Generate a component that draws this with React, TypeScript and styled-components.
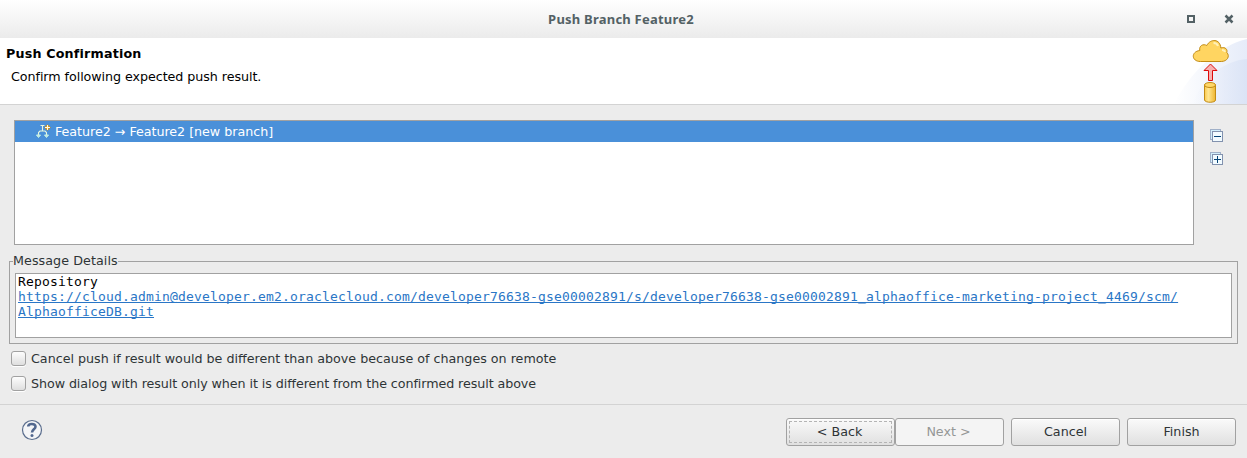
import React from "react";
import styled, { createGlobalStyle } from "styled-components";

const Global = createGlobalStyle`
  * { box-sizing: border-box; }
  html, body { margin: 0; background: #ececec; }
  body { overflow: hidden; font: 12.7px/16px "DejaVu Sans", Verdana, sans-serif; color: #2e3436; }
`;

const Window = styled.div`
  width: 1247px;
  height: 458px;
  display: flex;
  flex-direction: column;
  background: #ececec;
  white-space: pre;
`;

const TitleBar = styled.header`
  height: 38px;
  flex: none;
  display: grid;
  grid-template-columns: 1fr auto 1fr;
  align-items: center;
  background: linear-gradient(#fff, #ebebeb);
  padding-left: 1px;
  padding-right: 6px;
`;

const WindowTitle = styled.h1`
  grid-column: 2;
  margin: 0;
  font: bold 13px/20px "Noto Sans", "Open Sans", sans-serif;
  letter-spacing: 0.22px;
  color: #536165;
`;

const WindowControls = styled.div`
  display: flex;
  justify-content: flex-end;
  gap: 25px;
  padding-right: 6px;
`;

const Banner = styled.section`
  height: 67px;
  flex: none;
  display: flex;
  justify-content: space-between;
  background: #fff;
  border-bottom: 1px solid #d3d3d3;
  color: #000;
`;

const BannerText = styled.div`
  padding: 8px 0 0 6px;
`;

const Heading = styled.h2`
  margin: 0 0 7px;
  font-size: 12.7px;
  line-height: 16px;
  font-weight: bold;
  letter-spacing: 0.18px;
`;

const Text = styled.span<{ $spacing?: number }>`
  letter-spacing: ${(p) => p.$spacing ?? 0}px;
`;

const Description = styled.p`
  margin: 0 0 0 5px;
  letter-spacing: -0.06px;
`;

const Content = styled.main`
  flex: 1;
  padding: 15px 9px 0;
`;

const ResultArea = styled.div`
  display: flex;
  gap: 16px;
  padding-left: 5px;
`;

const Tree = styled.div`
  width: 1180px;
  height: 125px;
  border: 1px solid #a1a1a1;
  background: #fff;
`;

const TreeRow = styled.div`
  height: 21px;
  display: flex;
  align-items: center;
  gap: 4px;
  padding-left: 20px;
  background: #4a90d9;
  color: #fff;
`;

const TreeTools = styled.div`
  display: flex;
  flex-direction: column;
  gap: 9px;
  padding-top: 9px;
`;

const Group = styled.fieldset`
  width: 1229px;
  height: 91px;
  margin: 8px 0 2px;
  padding: 4px 5px 5px;
  border: 1px solid #a1a1a1;
`;

const Legend = styled.legend`
  margin-left: -2px;
  padding: 0;
  line-height: 16px;
  letter-spacing: 0.07px;
`;

const Details = styled.div`
  height: 65px;
  padding: 0 2px;
  border: 1px solid #a1a1a1;
  background: #fff;
  color: #000;
  font: 13px/15px "DejaVu Sans Mono", monospace;
  letter-spacing: 0.174px;
`;

const Link = styled.a`
  display: inline-block;
  color: #2a76c6;
  text-decoration: underline;
  text-underline-offset: 1px;
  text-decoration-skip-ink: none;
  text-decoration-thickness: 1px;
`;

const Option = styled.label`
  height: 25px;
  display: flex;
  align-items: center;
  gap: 5px;
  padding-left: 2px;
`;

const CheckBox = styled.input`
  appearance: none;
  width: 15px;
  height: 15px;
  margin: 0;
  border: 1px solid #a1a1a1;
  border-radius: 3px;
  background: linear-gradient(#fdfdfd, #dedede);
  box-shadow: 0 1px #fff;
`;

const Footer = styled.footer`
  height: 54px;
  flex: none;
  display: flex;
  align-items: center;
  padding: 0 11px 0 21px;
  border-top: 1px solid #d3d3d3;
`;

const HelpButton = styled.span`
  display: flex;
  padding-bottom: 4px;
`;

const Actions = styled.div`
  display: flex;
  margin-left: auto;
`;

const Button = styled.button<{ $gap?: number }>`
  width: 109px;
  height: 28px;
  margin: 0 0 0 ${(p) => p.$gap ?? 0}px;
  padding: 2px;
  border: 1px solid #a1a1a1;
  border-radius: 3px;
  background: linear-gradient(#fafafa, #e0e0e0);
  box-shadow: inset 0 1px #fff;
  color: #2e3436;
  font: inherit;
  &:disabled { background: #f4f4f4; color: #949796; box-shadow: none; padding-right: 4px; }
`;

const FocusRing = styled.span`
  display: block;
  height: 22px;
  padding-right: 2px;
  line-height: 20px;
  border: 1px dashed #b4b4b4;
`;

const BannerArt = () => (
  <svg width="75" height="66" viewBox="0 0 75 66">
    <defs>
      <linearGradient id="wave" x1="0" y1="0" x2="1" y2="0">
        <stop offset="0" stopColor="#fff" />
        <stop offset="1" stopColor="#e6ecf9" />
      </linearGradient>
      <linearGradient id="swell" x1="0" y1="0" x2="1" y2="0">
        <stop offset="0" stopColor="#e9eefa" stopOpacity="0" />
        <stop offset="1" stopColor="#dbe4f6" />
      </linearGradient>
      <linearGradient id="barrel">
        <stop stopColor="#fbc94b" />
        <stop offset=".35" stopColor="#ffe691" />
        <stop offset="1" stopColor="#efb52f" />
      </linearGradient>
    </defs>
    <path d="M2 66C17 36 45 8 75 1V66Z" fill="url(#wave)" />
    <path d="M20 66C32 38 52 23 75 21V66Z" fill="url(#swell)" />
    <path d="M28 23.500C19 23.500 18.500 13.500 27.500 12.500C26.500 7.500 31 5.500 34.500 7.500C38 .5 48 .5 48.500 10C53 8.500 55.500 11.500 54.500 14.500C58 18 55 23.500 49 23.500Z" transform="translate(.3 0)" fill="#ffd561" stroke="#c28b14" />
    <path d="M41.500 5Q45 5 46 8M50 12Q52.500 12 53 14" fill="none" stroke="#fff0b8" strokeWidth="2" />
    <path d="M38.500 26L45 32.500H40.500V42.500H36.500V32.500H32Z" fill="#f7b0b0" stroke="#dd0b0b" />
    <path d="M32.500 47V62C33 65 43.500 65 43.500 62V47Z" fill="url(#barrel)" stroke="#c28b14" />
    <ellipse cx="38" cy="47" rx="5.500" ry="2.500" fill="#ffd768" stroke="#c28b14" />
  </svg>
);

const BranchIcon = () => (
  <svg width="16" height="15" viewBox="0 0 16 15" fill="none">
    <path d="M5.500 1.500H9.500M7.500 1.500V7M3.500 11V8.500L5 7H10L11.500 8.500V11" stroke="#e6f5df" strokeWidth="1.100" />
    <path d="M1.500 11H5.500L3.500 13.500ZM9.500 11H13.500L11.500 13.500Z" fill="#b9e8e0" stroke="#c9f0e4" strokeWidth="1" />
    <path d="M12.500 .8L15.200 3.500L12.500 6.200L9.800 3.500Z" fill="#e7a51c" stroke="#d18e13" strokeLinejoin="round" />
    <path d="M12.500 1V6M10 3.500H15" stroke="#fffbe9" />
  </svg>
);

const TreeToolIcon = ({ expand = false }: { expand?: boolean }) => (
  <svg width="14" height="14" viewBox="0 0 14 14" fill="none" shapeRendering="crispEdges">
    <path d="M.5 .5H10.500V10.500H.5Z" fill="#d2effc" stroke="#a0b0c8" />
    <path d="M2.500 2.500H12.500V12.500H2.500Z" fill="#f2fbff" stroke="#8292ae" />
    <path d="M4 7.500H11" stroke="#064477" />
    {expand && <path d="M7.500 4V11" stroke="#064477" />}
  </svg>
);

const HelpIcon = () => (
  <svg width="22" height="22" viewBox="0 0 22 22" fill="none">
    <circle cx="11" cy="11" r="9.500" fill="#f4f5f7" stroke="#5a6d8d" strokeWidth="1.200" />
    <path d="M7.200 7.500C7.300 4.100 14.700 4 14.500 7.800C14.400 10.300 11 10.500 11 13.500" stroke="#52688f" strokeWidth="2.600" />
    <circle cx="11" cy="16.400" r="1.500" fill="#52688f" />
  </svg>
);

export default function App() {
  return (
    <Window>
      <Global />
      <TitleBar>
        <WindowTitle>Push Branch Feature2</WindowTitle>
        <WindowControls>
          <svg width="14" height="14" viewBox="0 0 14 14"><path d="M4 4H10V10H4Z" fill="none" stroke="#536165" strokeWidth="2" /></svg>
          <svg width="12" height="14" viewBox="0 0 12 14"><path d="M2.500 3.500L9.500 10.500M9.500 3.500L2.500 10.500" stroke="#536165" strokeWidth="2.500" /></svg>
        </WindowControls>
      </TitleBar>
      <Banner>
        <BannerText>
          <Heading>Push Confirmation</Heading>
          <Description>Confirm following expected push result.</Description>
        </BannerText>
        <BannerArt />
      </Banner>
      <Content>
        <ResultArea>
          <Tree>
            <TreeRow><BranchIcon /><Text $spacing={-0.03}>Feature2 → Feature2 [new branch]</Text></TreeRow>
          </Tree>
          <TreeTools><TreeToolIcon /><TreeToolIcon expand /></TreeTools>
        </ResultArea>
        <Group>
          <Legend>Message Details</Legend>
          <Details>
            <div>Repository</div>
            <Link>{"https://cloud.admin@developer.em2.oraclecloud.com/developer76638-gse00002891/s/developer76638-gse00002891_alphaoffice-marketing-project_4469/scm/\nAlphaofficeDB.git"}</Link>
          </Details>
        </Group>
        <Option><CheckBox type="checkbox" /><Text>Cancel push if result would be different than above because of changes on remote</Text></Option>
        <Option><CheckBox type="checkbox" /><Text $spacing={-0.075}>Show dialog with result only when it is different from the confirmed result above</Text></Option>
      </Content>
      <Footer>
        <HelpButton><HelpIcon /></HelpButton>
        <Actions>
          <Button><FocusRing>&lt; Back</FocusRing></Button>
          <Button disabled>Next &gt;</Button>
          <Button $gap={7}>Cancel</Button>
          <Button $gap={7}>Finish</Button>
        </Actions>
      </Footer>
    </Window>
  );
}
